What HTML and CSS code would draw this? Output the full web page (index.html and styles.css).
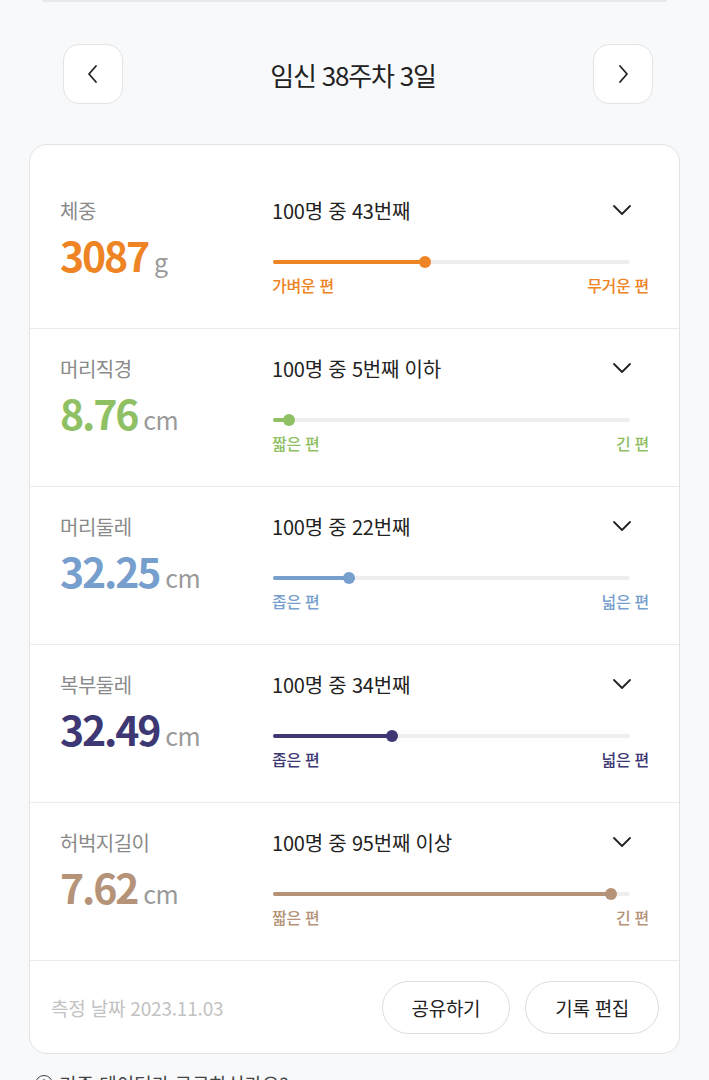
FILE: index.html
```html
<!DOCTYPE html>
<html lang="ko">
<head>
    <meta charset="UTF-8">
    <meta name="viewport" content="width=device-width, initial-scale=1.0">
    <title>태아 성장 기록</title>
    <link rel="stylesheet" href="styles.css">
</head>
<body>

<div class="top-line"></div>

<div class="nav">
    <button class="nav-btn" aria-label="이전">
        <svg width="12" height="20" viewBox="0 0 12 20"><polyline points="9,2 2,10 9,18" fill="none" stroke="#222" stroke-width="1.8" stroke-linecap="round" stroke-linejoin="round"/></svg>
    </button>
    <div class="nav-title">임신 38주차 3일</div>
    <button class="nav-btn" aria-label="다음">
        <svg width="12" height="20" viewBox="0 0 12 20"><polyline points="3,2 10,10 3,18" fill="none" stroke="#222" stroke-width="1.8" stroke-linecap="round" stroke-linejoin="round"/></svg>
    </button>
</div>

<div class="card">

    <div class="row orange">
        <div class="left">
            <div class="label">체중</div>
            <div class="value"><span class="num">3087</span><span class="unit">g</span></div>
        </div>
        <div class="right">
            <div class="rank">
                <span>100명 중 43번째</span>
                <svg class="chev" width="20" height="12" viewBox="0 0 20 12"><polyline points="2,2 10,10 18,2" fill="none" stroke="#222" stroke-width="1.8" stroke-linecap="round" stroke-linejoin="round"/></svg>
            </div>
            <div class="track"><div class="fill" style="width: 42.5%"></div></div>
            <div class="ends"><span>가벼운 편</span><span>무거운 편</span></div>
        </div>
    </div>

    <div class="row green">
        <div class="left">
            <div class="label">머리직경</div>
            <div class="value"><span class="num">8.76</span><span class="unit">cm</span></div>
        </div>
        <div class="right">
            <div class="rank">
                <span>100명 중 5번째 이하</span>
                <svg class="chev" width="20" height="12" viewBox="0 0 20 12"><polyline points="2,2 10,10 18,2" fill="none" stroke="#222" stroke-width="1.8" stroke-linecap="round" stroke-linejoin="round"/></svg>
            </div>
            <div class="track"><div class="fill" style="width: 4.5%"></div></div>
            <div class="ends"><span>짧은 편</span><span>긴 편</span></div>
        </div>
    </div>

    <div class="row blue">
        <div class="left">
            <div class="label">머리둘레</div>
            <div class="value"><span class="num">32.25</span><span class="unit">cm</span></div>
        </div>
        <div class="right">
            <div class="rank">
                <span>100명 중 22번째</span>
                <svg class="chev" width="20" height="12" viewBox="0 0 20 12"><polyline points="2,2 10,10 18,2" fill="none" stroke="#222" stroke-width="1.8" stroke-linecap="round" stroke-linejoin="round"/></svg>
            </div>
            <div class="track"><div class="fill" style="width: 21.3%"></div></div>
            <div class="ends"><span>좁은 편</span><span>넓은 편</span></div>
        </div>
    </div>

    <div class="row navy">
        <div class="left">
            <div class="label">복부둘레</div>
            <div class="value"><span class="num">32.49</span><span class="unit">cm</span></div>
        </div>
        <div class="right">
            <div class="rank">
                <span>100명 중 34번째</span>
                <svg class="chev" width="20" height="12" viewBox="0 0 20 12"><polyline points="2,2 10,10 18,2" fill="none" stroke="#222" stroke-width="1.8" stroke-linecap="round" stroke-linejoin="round"/></svg>
            </div>
            <div class="track"><div class="fill" style="width: 33.3%"></div></div>
            <div class="ends"><span>좁은 편</span><span>넓은 편</span></div>
        </div>
    </div>

    <div class="row brown">
        <div class="left">
            <div class="label">허벅지길이</div>
            <div class="value"><span class="num">7.62</span><span class="unit">cm</span></div>
        </div>
        <div class="right">
            <div class="rank">
                <span>100명 중 95번째 이상</span>
                <svg class="chev" width="20" height="12" viewBox="0 0 20 12"><polyline points="2,2 10,10 18,2" fill="none" stroke="#222" stroke-width="1.8" stroke-linecap="round" stroke-linejoin="round"/></svg>
            </div>
            <div class="track"><div class="fill" style="width: 94.7%"></div></div>
            <div class="ends"><span>짧은 편</span><span>긴 편</span></div>
        </div>
    </div>

    <div class="card-footer">
        <div class="date">측정 날짜 2023.11.03</div>
        <div class="actions">
            <button class="pill">공유하기</button>
            <button class="pill">기록 편집</button>
        </div>
    </div>
</div>

<div class="info">
    <span class="info-icon">i</span>
    기준 데이터가 궁금하신가요?
</div>

</body>
</html>
```

FILE: styles.css
```css
/* 기본 */
body {
    margin: 0;
    background: #f8f9fb;
    font-family: "Noto Sans CJK KR", "Noto Sans", sans-serif;
    color: #222;
    overflow: hidden;
}
button {
    font-family: inherit;
    background: #fff;
    cursor: pointer;
    padding: 0;
}

.top-line {
    height: 2px;
    margin: 0 42px;
    background: #e7e8ea;
    border-radius: 0 0 2px 2px;
}

/* 주차 이동 */
.nav {
    display: flex;
    align-items: center;
    padding: 42px 56px 0 63px;
}
.nav-btn {
    width: 60px;
    height: 60px;
    border: 1px solid #e3e3e3;
    border-radius: 16px;
    display: flex;
    align-items: center;
    justify-content: center;
}
.nav-title {
    flex: 1;
    text-align: center;
    font-size: 26px;
    letter-spacing: -1.2px;
    padding-right: 10px;
}

/* 카드 */
.card {
    margin: 40px 29px 0;
    background: #fff;
    border: 1px solid #e2e2e2;
    border-radius: 18px;
    padding-top: 26px;
}
.row {
    display: grid;
    grid-template-columns: 212px 1fr;
    padding: 26px 30px 32px;
    border-bottom: 1px solid #ebebeb;
}
.label {
    font-size: 20px;
    line-height: 28px;
    color: #8a8a8a;
    letter-spacing: -0.5px;
}
.value {
    display: flex;
    align-items: baseline;
    gap: 6px;
    margin-top: 7px;
}
.num {
    font-size: 41px;
    line-height: 44px;
    font-weight: 700;
    letter-spacing: -2.2px;
}
.unit {
    font-size: 25px;
    color: #9a9a9a;
    letter-spacing: -0.5px;
}

.rank {
    display: flex;
    justify-content: space-between;
    align-items: center;
    font-size: 20px;
    line-height: 28px;
    letter-spacing: -0.2px;
    padding-right: 17px;
}
.chev { margin-top: -2px; }

.track {
    position: relative;
    height: 4px;
    margin: 35px 19px 0 1px;
    background: #eeeeee;
    border-radius: 2px;
}
.fill {
    position: relative;
    height: 4px;
    border-radius: 2px;
}
.fill::after {
    content: "";
    position: absolute;
    right: -6px;
    top: -4px;
    width: 12px;
    height: 12px;
    border-radius: 50%;
    background: inherit;
}
.ends {
    display: flex;
    justify-content: space-between;
    margin-top: 10px;
    font-size: 16px;
    line-height: 22px;
    font-weight: 500;
    letter-spacing: -0.3px;
}

.orange .num, .orange .ends { color: #ee8424; }
.orange .fill { background: #ee8424; }
.green .num, .green .ends { color: #8fc064; }
.green .fill { background: #8fc064; }
.blue .num, .blue .ends { color: #779fcd; }
.blue .fill { background: #779fcd; }
.navy .num, .navy .ends { color: #3d3873; }
.navy .fill { background: #3d3873; }
.brown .num, .brown .ends { color: #b49379; }
.brown .fill { background: #b49379; }

/* 하단 */
.card-footer {
    display: flex;
    justify-content: space-between;
    align-items: center;
    padding: 20px 20px 19px 21px;
}
.date {
    font-size: 19px;
    color: #c2c2c2;
    letter-spacing: -0.2px;
}
.actions {
    display: flex;
    gap: 15px;
}
.pill {
    height: 53px;
    padding: 0 29px;
    border: 1px solid #dcdcdc;
    border-radius: 27px;
    font-size: 19px;
    color: #222;
    letter-spacing: -0.3px;
}

.info {
    display: flex;
    align-items: center;
    gap: 6px;
    margin-top: 16px;
    padding-left: 35px;
    font-size: 19px;
    color: #444;
}
.info-icon {
    width: 16px;
    height: 16px;
    border: 1.5px solid #444;
    border-radius: 50%;
    font-size: 11px;
    line-height: 16px;
    text-align: center;
    font-weight: 700;
}
```
